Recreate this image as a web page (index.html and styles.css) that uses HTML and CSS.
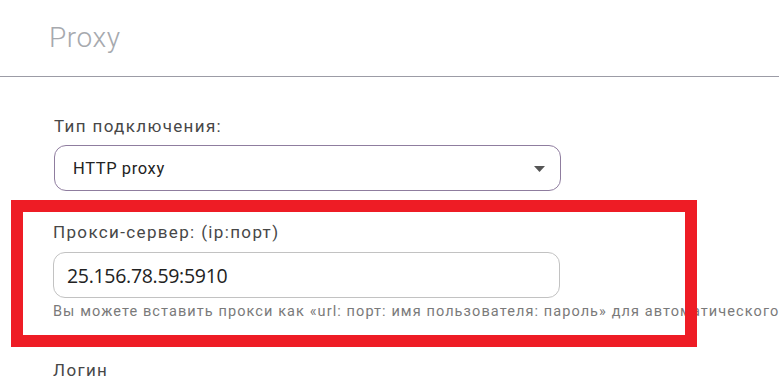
FILE: index.html
```html
<!DOCTYPE html>
<html lang="ru">
<head>
<meta charset="utf-8">
<title>Proxy</title>
<link rel="stylesheet" href="styles.css">
</head>
<body>
<div class="page">
  <header class="header">
    <h1 class="title">Proxy</h1>
  </header>
  <main class="form">
    <div class="field field-type">
      <label class="label">Тип подключения:</label>
      <div class="select">
        <span class="select-value">HTTP proxy</span>
        <svg class="caret" width="11" height="6" viewBox="0 0 11 6"><path d="M0 0 L11 0 L5.5 6 Z" fill="#555"/></svg>
      </div>
    </div>
    <div class="field field-server">
      <label class="label">Прокси-сервер: (ip:порт)</label>
      <div class="input"><span class="input-value">25.156.78.59:5910</span></div>
      <p class="hint">Вы можете вставить прокси как «url: порт: имя пользователя: пароль» для автоматического</p>
    </div>
    <div class="field field-login">
      <label class="label">Логин</label>
    </div>
  </main>
  <div class="highlight"></div>
</div>
</body>
</html>
```

FILE: styles.css
```css
* { box-sizing: border-box; }
html, body { margin: 0; padding: 0; background: #fff; }
body { width: 779px; height: 383px; overflow: hidden; font-family: Roboto, "Liberation Sans", sans-serif; }
.page { position: relative; width: 779px; height: 383px; overflow: hidden; }
.header { height: 77px; border-bottom: 1px solid #9c9ca6; padding-left: 49px; padding-top: 21px; }
.title { margin: 0; font-weight: 300; font-size: 28px; line-height: 34px; color: #a6a9ae; letter-spacing: 0.6px; }
.form { padding-left: 54px; display: flex; flex-direction: column; }
.field { display: flex; flex-direction: column; }
.field-type { padding-top: 39px; }
.label { font-size: 17px; color: #474747; line-height: 21px; letter-spacing: 1.35px; }
.select { margin-top: 8px; width: 507px; height: 46px; border: 1.5px solid #8f7d9f; border-radius: 12px; display: flex; align-items: center; justify-content: space-between; padding: 0 15px 0 18px; }
.select-value { font-size: 16.5px; color: #232323; letter-spacing: 0.6px; }
.caret { margin-top: 1px; }
.field-server { padding-top: 31px; margin-left: -1px; }
.input { margin-top: 9px; width: 507px; height: 46px; border: 1px solid #c2c2c2; border-radius: 12px; display: flex; align-items: center; padding-left: 13px; }
.input-value { font-family: "Open Sans", sans-serif; font-size: 19.5px; color: #222; letter-spacing: -0.3px; }
.hint { margin: 5px 0 0; font-size: 14.5px; color: #7a7a7a; white-space: nowrap; line-height: 18px; letter-spacing: 1.09px; }
.field-login { padding-top: 39px; margin-left: -1px; }
.highlight { position: absolute; left: 11px; top: 200px; width: 686px; height: 147px; border: 12px solid #ee1c25; }
```
